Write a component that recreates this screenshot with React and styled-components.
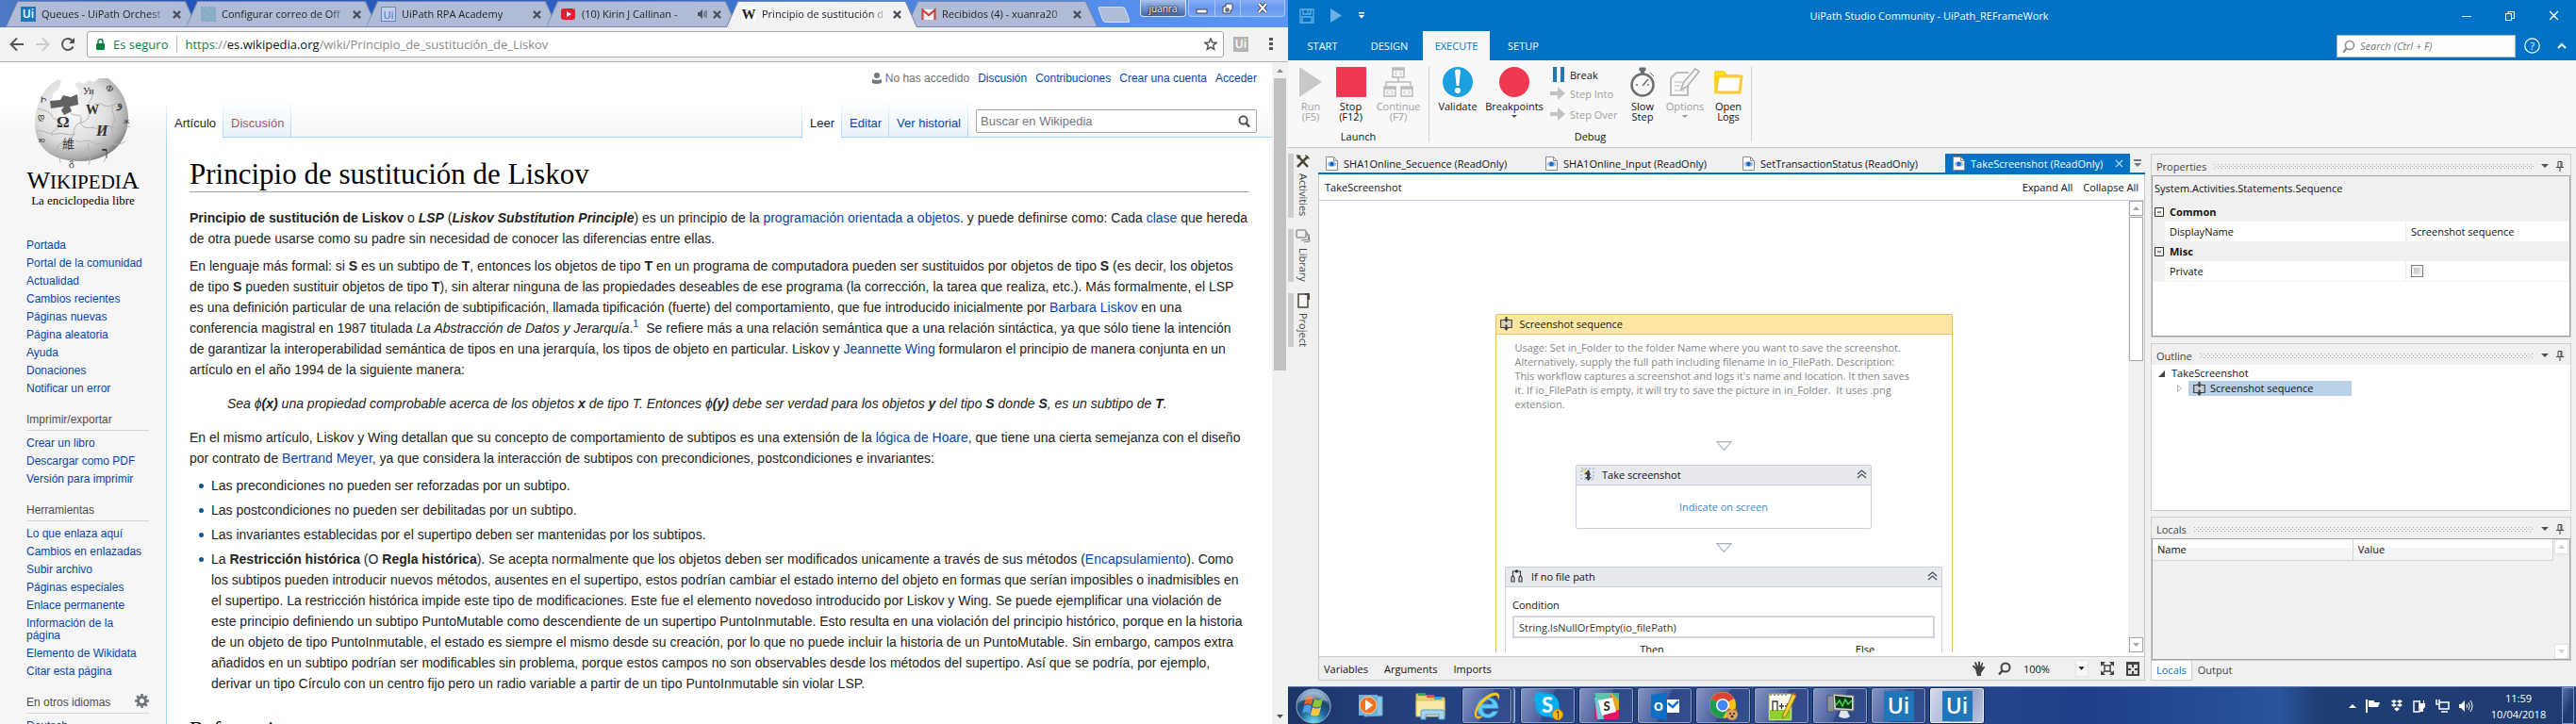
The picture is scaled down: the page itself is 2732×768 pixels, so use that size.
import React from "react";
import styled, { createGlobalStyle, css } from "styled-components";

const UI = '"Open Sans", "Noto Sans", sans-serif';
const SANS = '"Liberation Sans", Arial, sans-serif';
const SERIF = '"Liberation Serif", Georgia, serif';

const Global = createGlobalStyle`
  * { box-sizing: border-box; }
  body { margin: 0; overflow: hidden; font-family: ${SANS}; }
  button, input, select { font: inherit; color: inherit; margin: 0; padding: 0; border: 0; background: none; border-radius: 0; }
  button { text-align: inherit; }
  a { color: #0645ad; text-decoration: none; }
  svg { display: block; flex: none; }
  ul { list-style: none; margin: 0; padding: 0; }
`;

const Desktop = styled.div`
  display: flex;
  height: 100vh;
`;

/* ---------- Browser ---------- */
const Browser = styled.section`
  flex: 1 1 0;
  min-width: 0;
  display: flex;
  flex-direction: column;
  background: #fff;
`;
const TabStrip = styled.div`
  display: flex;
  align-items: flex-end;
  height: 29px;
  padding-left: 6px;
  flex: none;
  background: linear-gradient(90deg, #4e7ac6 0, #2355ba 14%, #2c60c4 45%, #4a83e0 68%, #5d96f2 100%);
`;
const BrowserTab = styled.div`
  position: relative;
  width: 203px;
  height: 28px;
  margin-right: -12px;
  padding: 0 17px 0 16px;
  display: flex;
  align-items: center;
  gap: 6px;
  font: 11px/16px ${UI};
  color: #222;
  isolation: isolate;
  z-index: ${(p) => (p.$active ? 2 : 0)};
  &::before, &::after {
    content: "";
    position: absolute;
    inset: 0;
    z-index: -2;
    background: #7486ad;
    clip-path: polygon(0 100%, 12px 0, calc(100% - 12px) 0, 100% 100%);
  }
  &::after {
    inset: ${(p) => (p.$active ? "1px 1px 0" : "1px")};
    z-index: -1;
    background: ${(p) => (p.$active ? "#f2f2f2" : "#b0bcd6")};
  }
`;
const TabName = styled.span`
  flex: 1;
  min-width: 0;
  overflow: hidden;
  white-space: nowrap;
  mask-image: linear-gradient(90deg, #000 calc(100% - 18px), transparent);
`;
const IconButton = styled.button`
  display: flex;
  align-items: center;
  justify-content: center;
`;
const NewTab = styled.button`
  width: 29px;
  height: 17px;
  margin: 0 0 5px 15px;
  border: 1px solid #d3def2;
  background: #b0bcd6;
  transform: skewX(20deg);
  border-radius: 3px;
`;
const UserBadge = styled.button`
  align-self: flex-start;
  width: 49px;
  height: 18px;
  margin-left: auto;
  border: 1px solid #d5e2f8;
  border-top: 0;
  border-radius: 0 0 4px 4px;
  text-align: center;
  background: linear-gradient(#a9c3ea, #6d92cc 50%, #45639d);
  color: #fff;
  font: 10px/16px ${UI};
  text-shadow: 0 0 2px #000, 0 0 2px #000;
`;
const Caption = styled.div`
  align-self: flex-start;
  display: grid;
  grid-template-columns: 27px 27px 47px;
  height: 18px;
  margin: 0 3px 0 2px;
  border: 1px solid #a9c6f8;
  border-top: 0;
  border-radius: 0 0 4px 4px;
  background: linear-gradient(#86aef3, #6899f0 50%, #77a5f5);
  button + button { border-left: 1px solid #a9c6f8; }
`;
const Toolbar = styled.div`
  display: flex;
  align-items: center;
  flex: none;
  height: 37px;
  padding: 0 10px;
  background: #f2f2f2;
  border-bottom: 1px solid #b5b5b5;
`;
const NavButtons = styled.div`
  display: flex;
  gap: 11px;
  width: 82px;
`;
const AddressBar = styled.div`
  flex: 1;
  display: flex;
  align-items: center;
  height: 28px;
  padding: 0 6px 0 9px;
  border: 1px solid #a9a9a9;
  border-radius: 3px;
  background: #fff;
  font: 13px/18px ${UI};
  color: #8a8a8a;
`;
const Secure = styled.span`
  color: #0b8043;
  padding: 0 9px;
  margin-right: 8px;
  border-right: 1px solid #bbb;
`;
const Url = styled.span`
  flex: 1;
  white-space: nowrap;
  b { font-weight: 400; color: #111; }
  i { font-style: normal; color: #0b8043; }
`;
const ToolbarEnd = styled.div`
  display: flex;
  align-items: center;
  gap: 22px;
  margin-left: 10px;
  padding-right: 6px;
`;
const UiTile = styled.span`
  display: inline-flex;
  align-items: center;
  justify-content: center;
  flex: none;
  width: ${(p) => p.$size}px;
  height: ${(p) => p.$size}px;
  background: ${(p) => p.$bg};
  color: ${(p) => p.$fg || "#fff"};
  border: ${(p) => (p.$outline ? "1px solid " + p.$fg : "0")};
  font: 600 ${(p) => p.$font}px/1 ${UI};
`;

/* ---------- Wikipedia page ---------- */
const Wiki = styled.div`
  flex: 1;
  min-height: 0;
  overflow: hidden;
  display: grid;
  grid-template-columns: 176px minmax(0, 1fr) 17px;
  background: linear-gradient(#fff 50%, #f6f6f6 100%) 0 0 / 100% 80px no-repeat #f6f6f6;
`;
const Sidebar = styled.aside`
  padding: 17px 18px 0 28px;
  font: 12px/13px ${SANS};
  li { padding: 3px 0; }
  overflow: hidden;
`;
const Logo = styled.a`
  display: flex;
  flex-direction: column;
  align-items: center;
  margin: 0 -10px 31px -28px;
  padding-left: 8px;
  color: #000;
`;
const Wordmark = styled.span`
  font: 26px/26px ${SERIF};
  small { font-size: 21px; }
`;
const Tagline = styled.span`
  font: 13px/14px ${SERIF};
`;
const NavTitle = styled.h3`
  display: flex;
  justify-content: space-between;
  margin: 14px 0 4px;
  padding-bottom: 1px;
  border-bottom: 1px solid #d4d4d4;
  font: 12px/19px ${SANS};
  color: #4d4d4d;
`;
const WikiMain = styled.div`
  display: flex;
  flex-direction: column;
  min-width: 0;
  min-height: 0;
`;
const Personal = styled.nav`
  display: flex;
  justify-content: flex-end;
  align-items: center;
  gap: 9px;
  height: 40px;
  padding: 0 16px 6px 0;
  font: 12px/14px ${SANS};
`;
const Anon = styled.span`
  display: flex;
  align-items: center;
  gap: 4px;
  color: #707070;
`;
const fadeLine = "linear-gradient(#fff0, #a7d7f9)";
const WikiTabs = styled.nav`
  display: flex;
  height: 40px;
  font: 13px/16px ${SANS};
  background: ${fadeLine} 0 0 / 1px 100% no-repeat;
  padding-left: 1px;
`;
const WikiTab = styled.a`
  padding: 17px 8px 0;
  color: ${(p) => p.$color || "#0645ad"};
  border-bottom: ${(p) => (p.$on ? "0" : "1px solid #a7d7f9")};
  background: ${fadeLine} 100% 0 / 1px 100% no-repeat,
    ${(p) => (p.$on ? "linear-gradient(#fff, #fff)" : "linear-gradient(#fff, #e8f2f8)")};
`;
const TabSpace = styled.div`
  flex: 1;
  border-bottom: 1px solid #a7d7f9;
  background: ${fadeLine} 100% 0 / 1px 100% no-repeat;
`;
const SearchCell = styled.div`
  border-bottom: 1px solid #a7d7f9;
  padding: 10px 16px 0 8px;
`;
const SearchBox = styled.form`
  display: flex;
  align-items: center;
  width: 298px;
  height: 25px;
  padding: 0 6px 0 4px;
  border: 1px solid #a2a9b1;
  border-radius: 2px;
  background: #fff;
  input { flex: 1; min-width: 0; outline: 0; }
  input::placeholder { color: #72777d; opacity: 1; }
`;
const Article = styled.article`
  flex: 1;
  min-height: 0;
  overflow: hidden;
  padding: 20px 24px 0;
  border-left: 1px solid #a7d7f9;
  background: #fff;
  color: #222;
  font: 14px/22px ${SANS};
  p { margin: 0 0 7px; }
  sup { font-size: 11px; line-height: 0; }
  blockquote { margin: 14px 40px; }
  li { position: relative; margin-bottom: 4px; }
  li::before {
    content: "";
    position: absolute;
    left: -13px;
    top: 9px;
    width: 5px;
    height: 5px;
    border-radius: 50%;
    background: #0a5793;
  }
  ul { padding-left: 23px; }
`;
const Title = styled.h1`
  margin: 0 0 16px;
  border-bottom: 1px solid #a2a9b1;
  color: #000;
  font: 31px/37px ${SERIF};
`;
const Subtitle = styled.h2`
  margin: 24px 0 0;
  color: #000;
  border-bottom: 1px solid #a2a9b1;
  font: 23px/28px ${SERIF};
`;
const PageScroll = styled.div`
  display: flex;
  flex-direction: column;
  align-items: center;
  justify-content: space-between;
  padding: 7px 0 6px;
  background: #f1f1f1;
`;
const PageThumb = styled.div`
  width: 13px;
  flex: 0 0 45%;
  background: #c1c1c1;
  margin: 6px 0 auto;
`;

/* ---------- Studio ---------- */
const Studio = styled.section`
  flex: 1 1 0;
  min-width: 0;
  display: flex;
  flex-direction: column;
  background: #f0f0f0;
  font: 11px/15px ${UI};
  color: #111;
`;
const TitleBar = styled.header`
  display: grid;
  grid-template-columns: 1fr auto 1fr;
  align-items: center;
  flex: none;
  height: 33px;
  padding: 0 18px 0 12px;
  background: #0072c6;
  color: #fff;
`;
const QuickBar = styled.div`
  display: flex;
  align-items: center;
  gap: ${(p) => p.$gap}px;
  justify-content: ${(p) => p.$end && "flex-end"};
`;
const MenuBar = styled.div`
  display: flex;
  align-items: center;
  flex: none;
  height: 31px;
  padding: 0 10px 0 1px;
  background: #0072c6;
  color: #fff;
`;
const MenuTab = styled.button`
  width: 71px;
  height: 31px;
  text-align: center;
  background: ${(p) => (p.$on ? "#f8f8f8" : "none")};
  color: ${(p) => (p.$on ? "#0072c6" : "#fff")};
`;
const StudioSearch = styled.label`
  display: flex;
  align-items: center;
  gap: 5px;
  width: 190px;
  height: 24px;
  margin-left: auto;
  padding: 0 5px;
  border: 1px solid #b9b9b9;
  background: #fff;
  color: #777;
  font-style: italic;
  input { width: 100%; font-style: italic; outline: 0; }
  input::placeholder { color: #777; opacity: 1; }
`;
const HelpTools = styled.div`
  display: flex;
  align-items: center;
  gap: 18px;
  margin-left: 9px;
`;
const Ribbon = styled.div`
  display: flex;
  flex: none;
  height: 93px;
  padding: 6px 0;
  background: #f8f8f8;
  border-bottom: 1px solid #c3c3c3;
`;
const Group = styled.div`
  display: flex;
  flex-direction: column;
  justify-content: space-between;
  padding: 0 3px;
  border-right: 1px solid #d2d2d2;
  text-align: center;
  line-height: 11px;
`;
const GroupRow = styled.div`
  display: flex;
`;
const RibbonButton = styled.button`
  display: flex;
  flex-direction: column;
  align-items: center;
  gap: 4px;
  width: ${(p) => p.$w}px;
  padding-top: 1px;
  text-align: center;
  line-height: 11px;
  color: ${(p) => (p.$off ? "#a0a0a0" : "#111")};
  white-space: pre-line;
`;
const SmallStack = styled.div`
  display: flex;
  flex-direction: column;
  width: 83px;
  padding-left: 5px;
`;
const SmallButton = styled.button`
  display: flex;
  align-items: center;
  gap: 4px;
  height: 22px;
  white-space: nowrap;
  color: ${(p) => (p.$off ? "#a0a0a0" : "#111")};
  &:first-child { height: 18px; }
`;
const Workspace = styled.div`
  flex: 1;
  min-height: 0;
  display: grid;
  grid-template-columns: 32px minmax(0, 1fr) 446px;
  padding: 6px 5px 6px 0;
`;
const Rail = styled.nav`
  display: flex;
  flex-direction: column;
  gap: 12px;
`;
const RailButton = styled.button`
  display: flex;
  align-items: center;
  gap: 5px;
  width: 26px;
  height: ${(p) => p.$h}px;
  border-left: 6px solid #cdcdcd;
  writing-mode: vertical-rl;
  font: 11px/16px ${UI};
  color: #444;
`;
const Editor = styled.main`
  display: flex;
  flex-direction: column;
  min-width: 0;
  min-height: 0;
  margin-right: 6px;
`;
const DocTabs = styled.div`
  display: flex;
  align-items: center;
  flex: none;
  height: 22px;
  border-bottom: 2px solid #0072c6;
`;
const DocTab = styled.button`
  display: flex;
  align-items: center;
  flex: none;
  gap: 6px;
  width: ${(p) => p.$w}px;
  height: 20px;
  padding: 0 7px 0 8px;
  white-space: nowrap;
  ${(p) => p.$on && css`background: #0072c6; color: #fff;`}
  svg:last-child:not(:first-child) { margin-left: auto; }
`;
const EditorFrame = styled.div`
  flex: 1;
  min-height: 0;
  display: flex;
  flex-direction: column;
  border: 1px solid #c8c8c8;
  border-top: 0;
  background: #fff;
`;
const Crumbs = styled.div`
  display: flex;
  align-items: center;
  flex: none;
  gap: 11px;
  height: 28px;
  padding: 0 6px;
  border-bottom: 1px solid #c9cde3;
  span { flex: 1; }
`;
const CanvasRow = styled.div`
  flex: 1;
  min-height: 0;
  display: flex;
  margin-bottom: 4px;
`;
const Canvas = styled.div`
  flex: 1;
  min-width: 0;
  overflow: hidden;
  padding-top: 120px;
`;
const ScrollTrack = styled.div`
  display: flex;
  flex-direction: column;
  width: 17px;
  flex: none;
  padding: 0 1px;
  background: #f0f0f0;
`;
const ScrollButton = styled.button`
  display: flex;
  align-items: center;
  justify-content: center;
  height: 16px;
  flex: none;
  border: 1px solid ${(p) => p.$c || "#a6a6a6"};
  background: #fff;
`;
const ScrollThumb = styled.div`
  flex: 0 0 32%;
  margin: 1px 0 auto;
  border: 1px solid #a6a6a6;
  background: #fff;
`;
const Spacer = styled.div`
  flex: 1;
`;
const Card = styled.div`
  width: ${(p) => p.$w}px;
  height: ${(p) => p.$h && p.$h + "px"};
  margin: 0 auto;
  border: 1px solid ${(p) => (p.$gold ? "#e5c365" : "#c9cfdd")};
  border-radius: 2px;
  background: #fff;
`;
const CardHead = styled.div`
  display: flex;
  align-items: center;
  gap: 8px;
  height: 21px;
  padding: 0 4px 2px;
  background: ${(p) => (p.$gold ? "#ffe7a2" : "#e7e9ed")};
  border-bottom: 1px solid ${(p) => (p.$gold ? "#e5c365" : "#c9cfdd")};
  span { flex: 1; }
`;
const Annotation = styled.p`
  margin: 6px 43px 32px 20px;
  color: #868686;
`;
const Connector = styled.div`
  display: flex;
  justify-content: center;
  margin: ${(p) => (p.$first ? "0" : "15px")} 0 15px;
`;
const Indicate = styled.a`
  display: block;
  padding-top: 15px;
  text-align: center;
  color: #3a87cc;
`;
const Condition = styled.label`
  display: block;
  padding: 11px 7px 0;
  input {
    display: block;
    width: 100%;
    height: 24px;
    margin-top: 4px;
    padding: 0 5px;
    border: 2px solid #cfd4e2;
    color: #333;
  }
`;
const Branches = styled.div`
  display: grid;
  grid-template-columns: 226px 1fr;
  padding: 4px 0 20px 42px;
  text-align: center;
  span + span { padding-left: 32px; }
`;
const StatusBar = styled.div`
  display: flex;
  align-items: center;
  flex: none;
  height: 25px;
  padding: 0 5px;
  gap: 17px;
  background: #f0f0f0;
  border-top: 1px solid #c8c8c8;
`;
const ZoomTools = styled.div`
  display: flex;
  align-items: center;
  gap: 13px;
  margin-left: auto;
`;
const ZoomSelect = styled.span`
  display: flex;
  align-items: center;
  select { appearance: none; width: 55px; outline: 0; }
  svg { width: 14px; height: 18px; background: #f8f8f8; border: 1px solid #e4e4e4; }
`;
const Panels = styled.aside`
  display: grid;
  grid-template-rows: 195fr 178fr 174fr;
  gap: 6px;
  min-height: 0;
`;
const Panel = styled.section`
  display: flex;
  flex-direction: column;
  min-height: 0;
  flex: 1;
  border: 1px solid #cdcdcd;
`;
const PanelHead = styled.header`
  display: flex;
  align-items: center;
  gap: 8px;
  flex: none;
  height: 22px;
  padding: 2px 7px 0 5px;
  color: #444;
`;
const Grip = styled.span`
  flex: 1;
  height: 5px;
  background:
    conic-gradient(from 270deg at 1px 1px, #a5a5a5 90deg, #0000 0) 0 0 / 4px 4px,
    conic-gradient(from 270deg at 1px 1px, #a5a5a5 90deg, #0000 0) 2px 2px / 4px 4px;
`;
const Inset = styled.div`
  flex: 1;
  min-height: 0;
  display: flex;
  flex-direction: column;
  border: ${(p) => (p.$plain ? "0" : "1px solid #a0a0a0")};
  background: ${(p) => (p.$gray ? "#f0f0f0" : "#fff")};
`;
const ClassName = styled.div`
  padding: 5px 2px 7px;
  background: #f0f0f0;
`;
const PropTable = styled.table`
  width: 100%;
  border-collapse: collapse;
  table-layout: fixed;
  background: #f0f0f0;
  td, th { height: 21px; padding: 0 5px; text-align: left; font-weight: 400; }
  td { background: #fff; border: solid #f0f0f0; border-width: 0 1px 1px 0; }
  .gutter { background: #f0f0f0; }
  input[type="checkbox"] { display: block; }
`;
const Category = styled.div`
  display: flex;
  align-items: center;
  gap: 6px;
  margin-left: -3px;
  font-weight: 700;
`;
const Tick = styled.input`
  appearance: none;
  width: 13px;
  height: 13px;
  border: 1px solid #7f8080;
  background: linear-gradient(135deg, #b3b9c1, #f4f4f4);
  box-shadow: inset 0 0 0 2px #f4f4f4;
`;
const Tree = styled.ul`
  padding: 1px 5px;
  li { line-height: 16px; }
`;
const TreeRow = styled.div`
  display: flex;
  align-items: center;
  gap: 7px;
  height: 16px;
  padding-left: ${(p) => (p.$child ? 22 : 2)}px;
`;
const Selected = styled.span`
  display: flex;
  align-items: center;
  gap: 5px;
  width: 173px;
  height: 16px;
  padding-left: 5px;
  background: #b9d1e8;
`;
const LocalsTable = styled.table`
  align-self: flex-start;
  width: 100%;
  border-collapse: collapse;
  table-layout: fixed;
  th {
    height: 22px;
    padding: 0 5px;
    text-align: left;
    font-weight: 400;
    border: solid #d5d5d5;
    border-width: 0 1px 1px 0;
    background: linear-gradient(#fff 40%, #f3f4f6 42%);
  }
`;
const LocalsBody = styled.div`
  display: flex;
  flex: 1;
  min-height: 0;
`;
const FootTabs = styled.div`
  display: flex;
  flex: none;
  height: 21px;
`;
const FootTab = styled.button`
  padding: 0 5px 1px;
  color: ${(p) => (p.$on ? "#0072c6" : "#444")};
  border: solid ${(p) => (p.$on ? "#cdcdcd" : "transparent")};
  border-width: 0 1px 1px;
  background: ${(p) => (p.$on ? "#fff" : "none")};
`;
const Bottom = styled.div`
  display: flex;
  flex-direction: column;
  min-height: 0;
`;

/* ---------- Task bar ---------- */
const TaskBar = styled.footer`
  display: flex;
  align-items: center;
  flex: none;
  height: 40px;
  padding: 0 2px 0 9px;
  border-top: 1px solid #5b78ab;
  background: linear-gradient(90deg, #1c3467 0, #25427f 10%, #28478c 50%, #1e4088 62%, #2a549b 77%, #1f3e74 80%, #1f3c70 100%);
  color: #fff;
`;
const Pinned = styled.button`
  display: flex;
  align-items: center;
  justify-content: center;
  width: ${(p) => p.$w}px;
  margin-right: ${(p) => p.$after || 0}px;
`;
const TaskButton = styled.button`
  display: flex;
  align-items: center;
  justify-content: center;
  width: ${(p) => (p.$stack ? 54 : 59)}px;
  height: 39px;
  margin-right: ${(p) => (p.$stack ? 8 : 3)}px;
  border: 1px solid #16264d;
  border-radius: 3px;
  box-shadow: inset 0 0 0 1px ${(p) => (p.$on ? "#e6ecf8" : "#8fa3cd")}${(p) => (p.$stack ? ", 3px 0 0 -1px #5671ab, 4px 0 0 -1px #a7b6d8" : "")};
  background: ${(p) => (p.$on ? "linear-gradient(115deg, #d5dbec, #a9b4d4 50%, #8895c0 52%, #c2cbe2)" : "linear-gradient(115deg, #8796c4, #4a609f 48%, #2f4888 52%, #36508f)")};
`;
const Tray = styled.div`
  display: flex;
  align-items: center;
  gap: 10px;
  margin-left: auto;
`;
const Clock = styled.time`
  width: 72px;
  margin-left: 2px;
  text-align: center;
  line-height: 17px;
`;
const ShowDesktop = styled.button`
  width: 13px;
  height: 39px;
  border: 1px solid #7f97c4;
  background: linear-gradient(115deg, #5470a8, #1e3a70 60%);
`;

/* ---------- Icons ---------- */
const Svg = ({ w, h, vb, children, ...r }) => (
  <svg width={w} height={h} viewBox={vb || `0 0 ${w} ${h}`} fill="none" aria-hidden="true" {...r}>{children}</svg>
);
const Cross = ({ s = 8, c = "#4a4f5c", w = 2 }) => (
  <Svg w={s} h={s} vb="0 0 8 8"><path d="M.8 .8l6.400 6.400M7.200 .8L.8 7.200" stroke={c} strokeWidth={w} /></Svg>
);
const Tri = ({ up, c = "#505050", w = 7, h = 4 }) => (
  <Svg w={w} h={h} vb="0 0 8 4" preserveAspectRatio="none"><path d={up ? "M0 4L4 0l4 4z" : "M0 0l4 4 4-4z"} fill={c} /></Svg>
);
const CaretBox = () => <Svg w={14} h={18}><path d="M3 7h7l-3.500 4z" fill="#111" /></Svg>;
const Globe = () => (
  <Svg w={104} h={96}>
    <defs>
      <radialGradient id="ball" cx=".4" cy=".38" r=".66">
        <stop offset="0" stopColor="#fbfbfb" /><stop offset=".6" stopColor="#dedede" /><stop offset=".88" stopColor="#adadad" /><stop offset="1" stopColor="#7a7a7a" />
      </radialGradient>
    </defs>
    <path d="M18 6l8-5 3 3-3 8-5 3-3 10 4 3 9-2 4-4 6 1 8-3-2-8 -4-6 6-2 4 2 5-4 6 2 5-4 10 0 6 6c9 8 15 22 15 36 0 27-21 46-51 46S1 74 1 48C1 34 6 17 18 6z" fill="url(#ball)" />
    <path d="M17 24l11-1 3-5 8 2 7-3 1 11-9 2 2 5-8 4-3-5 3-4-14 2z" fill="#616161" />
    <g stroke="#b2b2b2" strokeWidth="1">
      <path d="M4 32c8 3 12 2 15 8s9 2 8 9-9 5-8 12M38 36c4 6 14 0 12 8s6 10 14 8M2 56c9-2 14 5 22 3s13 3 20 0M28 90c0-8-6-10-3-17s12-3 15-9 2-12 6-15 10-2 12-8-3-12 2-18-2-12-2-14" />
      <path d="M64 28c8-4 10 4 18 1s10-4 15-2M61 52c10 4 14-4 22 0s11 2 19-1M84 28c-4 8 5 12 0 20s4 14-2 21-3 12-8 20M44 66c8 4 12-3 18 2s12-2 20 1 10 0 15-2M58 68c-3 8 5 12 0 24" />
    </g>
    <g fill="#333" fontFamily="Liberation Serif, serif">
      <text x="24" y="52" fontSize="17" fontWeight="700">Ω</text>
      <text x="55" y="38" fontSize="14" fontWeight="700">W</text>
      <text x="66" y="61" fontSize="16" fontWeight="700" fontStyle="italic">И</text>
      <text x="72" y="82" fontSize="13" fontWeight="700">ך</text>
      <text x="52" y="17" fontSize="10">Уи</text>
      <text x="76" y="14" fontSize="10" transform="rotate(20 80 12)">Ф</text>
      <text x="88" y="31" fontSize="13">و</text>
      <text x="7" y="26" fontSize="9">Ի</text>
      <text x="4" y="44" fontSize="9">დ</text>
      <text x="5" y="68" fontSize="9">ю</text>
      <text x="37" y="93" fontSize="10">გ</text>
      <text x="95" y="48" fontSize="9">ж</text>
      <text x="30" y="74" fontSize="13" fontFamily="Noto Sans CJK TC, sans-serif">維</text>
    </g>
  </Svg>
);
const MailIcon = () => (
  <Svg w={16} h={16}><path d="M1 3h14v11H1z" fill="#f4f4f4" /><path d="M1.500 14V3.500L8 9l6.500-5.500V14" stroke="#c9423c" strokeWidth="2.200" /></Svg>
);
const Knit = () => (
  <Svg w={16} h={16}>{[0, 4, 8, 12].map((x) => [0, 4, 8, 12].map((y) => (
    <path key={x + "-" + y} d={`M${x} ${y}l4 2M${x} ${y + 2}l4 2`} stroke={(x + y) % 8 ? "#8e9ad0" : "#5bb0aa"} strokeWidth="1.200" />
  )))}</Svg>
);
const Play = ({ w, h, c }) => <Svg w={w} h={h} vb="0 0 12 16" preserveAspectRatio="none"><path d="M0 0l12 8-12 8z" fill={c} /></Svg>;
const Flow = () => (
  <Svg w={32} h={32}><g stroke="#b9b9b9" strokeWidth="1.500">
    <path d="M10 1h12v10H10zM1 21h12v10H1zM19 21h12v10H19zM16 11v5M3 20v-4h26v4" />
    <path d="M10 2.500h12M1 22.500h12M19 22.500h12" strokeWidth="2.500" />
    <path d="M14.500 5l-2 2 2 2M17.500 5l2 2-2 2M5.500 25l-2 2 2 2M8.500 25l2 2-2 2M23.500 25l-2 2 2 2M26.500 25l2 2-2 2" strokeWidth="1" />
  </g></Svg>
);
const Warn = () => (
  <Svg w={32} h={32}><circle cx="16" cy="16" r="16" fill="#1ba1e2" /><path d="M13 4.500a3 2 0 016 0L17.300 20h-2.600z" fill="#fff" /><circle cx="16" cy="25" r="3" fill="#fff" /></Svg>
);
const Watch = () => (
  <Svg w={32} h={32}><circle cx="16" cy="19" r="11.500" stroke="#6b6f73" strokeWidth="2.500" /><path d="M13 1h6v3h-1.500v4h-3V4H13zM24 6l4 4" fill="#6b6f73" stroke="#6b6f73" /><path d="M16 20l6-7M9 19h2M21 19h2" stroke="#6b6f73" strokeWidth="1.500" /></Svg>
);
const Notes = () => (
  <Svg w={32} h={32}><path d="M20 6H7L1 12v18h18V19" stroke="#bdbdbd" strokeWidth="2" /><path d="M5 16h8M5 20h6M5 25h10" stroke="#bdbdbd" /><path d="M12 24l2-7L27 2l4 3-13 16z" fill="#f8f8f8" stroke="#adadad" strokeWidth="1.500" /></Svg>
);
const Folder = () => (
  <Svg w={32} h={32}><path d="M2 27V5h9l3 4h13v3" fill="#ffee00" stroke="#ffd21c" strokeWidth="2" /><path d="M5 10h25l-2 17H3z" fill="#fff" stroke="#ffc937" strokeWidth="3" /></Svg>
);
const ArrowR = () => <Svg w={17} h={14}><path d="M0 5h8V0l8 7-8 7V9H0z" fill="#c2c2c2" /></Svg>;
const Pause = () => <Svg w={17} h={16}><path d="M3 0h4v16H3zM11 0h4v16h-4z" fill="#1f76b9" /></Svg>;
const Doc = () => (
  <Svg w={13} h={15}><path d="M.500 .500h8l4 4v10H.500z" fill="#fff" stroke="#8c8c8c" /><path d="M8.500 .500v4h4" stroke="#8c8c8c" /><ellipse cx="6.500" cy="8" rx="5" ry="3" fill="#a8c4e8" /><circle cx="6.500" cy="8" r="2.300" fill="#1767c4" /></Svg>
);
const SeqIcon = () => (
  <Svg w={13} h={15}><path d="M2 3h9v9H2z" fill="#ccc" opacity=".7" /><path d="M4 3.500H.700v8H4M9 3.500h3.300v8H9" stroke="#444" strokeWidth="1.200" /><path d="M3.500 2.500h6L6.500 6zM3.500 11h6l-3 4zM5.500 0h2v3h-2zM5.500 8.500h2V12h-2z" fill="#3d3d3d" /></Svg>
);
const ShotIcon = () => (
  <Svg w={15} h={14}><rect x="1" y="1" width="13" height="11" stroke="#6aa8d8" strokeDasharray="2 2" /><path d="M4 7l5-5 2 6zM7 6h3v4h2l-3.500 4L5 10h2z" fill="#44484d" /><circle cx="4" cy="3" r="2" fill="#f4d56a" /></Svg>
);
const IfIcon = () => (
  <Svg w={15} h={15}><path d="M3.500 5V2h8v3M2 9l1.500-3L5 9v4H2zM10 9l1.500-3L13 9v4h-3z" stroke="#3d3d3d" strokeWidth="1.200" /><circle cx="7.500" cy="2" r="1.700" fill="#333" /></Svg>
);
const Collapse = () => <Svg w={11} h={10}><path d="M1 5l4.500-4L10 5M1 9l4.500-4L10 9" stroke="#444b5a" strokeWidth="1.200" /></Svg>;
const DownTri = () => <Svg w={17} h={10}><path d="M.800 .600h15.400L8.500 9.300z" fill="#fff" stroke="#a8b2c2" strokeWidth="1.200" /></Svg>;
const Pin = () => <Svg w={8} h={11}><path d="M2 .500h4v6H2zM5 .500v6M0 6.500h8M4 7v4" stroke="#444" /></Svg>;
const Lens = ({ s = 13, c = "#4a4f54", flip, w = 2 }) => (
  <Svg w={s} h={s} vb="0 0 14 14"><g transform={flip ? "translate(14 0) scale(-1 1)" : undefined}><circle cx="6" cy="6" r="4.500" stroke={c} strokeWidth={w} /><path d="M9 9l4 4.500" stroke={c} strokeWidth={w + 0.5} /></g></Svg>
);
const Minus = () => <Svg w={10} h={10}><path d="M.500 .500h9v9h-9zM3 5h4" stroke="#333" /></Svg>;
const Orb = () => (
  <Svg w={38} h={38}>
    <defs><radialGradient id="orb" cx=".5" cy="1" r=".95"><stop offset="0" stopColor="#6fe6f5" /><stop offset=".45" stopColor="#1b5f94" /><stop offset=".7" stopColor="#1e4570" /><stop offset="1" stopColor="#8fb2d2" /></radialGradient></defs>
    <circle cx="19" cy="19" r="18" fill="url(#orb)" stroke="#9bb8d8" />
    <path d="M11 10c3-2 5-2 8 0l-2 8c-3-2-5-2-8 0z" fill="#e8602c" /><path d="M20 11c3 2 6 2 9 0l-2 8c-3 2-6 2-9 0z" fill="#8cc63f" />
    <path d="M9 19c3-2 5-2 8 0l-2 8c-3-2-5-2-8 0z" fill="#4a9fe0" /><path d="M18 20c3 2 6 2 9 0l-2 8c-3 2-6 2-9 0z" fill="#fdc83e" />
    <path d="M3 15a17 17 0 0132 0c-9-5-22-5-32 0z" fill="#fff" opacity=".3" />
  </Svg>
);
const MediaIcon = () => (
  <Svg w={26} h={25}><path d="M6 2l19 1v20L6 24z" fill="#8fc4e6" stroke="#5f9fcb" /><path d="M0 1h20v22H0z" fill="#6fb0d8" /><circle cx="10" cy="12" r="9" fill="#ee7420" stroke="#fbd0a2" /><path d="M7 6l8 6-8 6z" fill="#fff" /></Svg>
);
const FilesIcon = () => (
  <Svg w={32} h={30}><path d="M1 2h9l3 4h18v18H1z" fill="#e9cf72" stroke="#c6a644" /><path d="M3 1h8v3H3z" fill="#3f9e46" /><path d="M12 3h8v3h-8z" fill="#d9534f" /><path d="M20 5h8v3h-8z" fill="#3aa5dc" /><path d="M1 9h30v17H1z" fill="#f8e9a6" stroke="#d6bb60" /><path d="M6 29v-8q0-2 2-2h20q3 0 3 2v8h-6v-5H11v5z" fill="#a5d3ee" stroke="#5d9cc9" /></Svg>
);
const IeIcon = () => (
  <Svg w={32} h={32}><path d="M28 18.500H11.500c0 7 8 8 10.500 3h5.500c-4 11-22 9-22-4.500S28 3 28 18.500zM11.500 14h10.500c-1-6-9.500-6-10.500 0z" fill="#5fc8f5" stroke="#2a8fd0" fillRule="evenodd" /><path d="M5 29C-2 24 9 6 22 2c6-2 9 2 6 8 0-5-2-6-6-4.500C13 9 5 19 5 25c0 3 4 2.500 7 1-3 3-5 4-7 3z" fill="#f9c51d" /></Svg>
);
const SkypeIcon = () => (
  <Svg w={32} h={32}><circle cx="15" cy="15" r="12.500" fill="#00aff0" /><circle cx="8" cy="8" r="7" fill="#00aff0" /><circle cx="22" cy="22" r="7" fill="#00aff0" />
    <text x="15" y="23" textAnchor="middle" fontFamily="Lato, sans-serif" fontWeight="900" fontSize="22" fill="#fff">S</text>
    <circle cx="26" cy="25" r="5.500" fill="#ffb900" stroke="#c88a00" /><text x="26" y="29" textAnchor="middle" fontSize="10" fill="#222">1</text></Svg>
);
const SlackIcon = () => (
  <Svg w={26} h={28}><rect width="26" height="28" rx="2" fill="#e01765" /><path d="M0 0h18l-2 8L2 10z" fill="#5dc3a9" /><path d="M0 5l6 1 4 22H3z" fill="#6ecadc" /><path d="M17 0h9v18l-6 1z" fill="#e9a820" /><path d="M18 0l8 0v8z" fill="#3eb991" /><path d="M4 8l15-3 4 15-15 4z" fill="#fff" />
    <text x="13" y="19" textAnchor="middle" fontFamily="Lato, sans-serif" fontWeight="900" fontSize="13" fill="#333">S</text></Svg>
);
const MailAppIcon = () => (
  <Svg w={32} h={32}><path d="M17 9h14v14H17z" fill="#fff" /><path d="M19 13l5 4 6-6" stroke="#1173c7" strokeWidth="2.500" /><path d="M1 4l17-3v30L1 28z" fill="#0f6ec2" />
    <text x="9" y="21" textAnchor="middle" fontFamily="Open Sans, sans-serif" fontWeight="700" fontSize="13" fill="#fff">O</text></Svg>
);
const ChromeIcon = () => (
  <Svg w={32} h={32}><circle cx="15" cy="15" r="14" fill="#fbc116" /><path d="M15 15L3 8a14 14 0 0124 0z" fill="#db4437" /><path d="M15 15L3 8a14 14 0 0012 21l5-9z" fill="#1a9c55" /><circle cx="15" cy="15" r="7" fill="#fff" /><circle cx="15" cy="15" r="5.500" fill="#4285f4" /><circle cx="25" cy="25" r="6" fill="#d9a25f" /><path d="M19 22l2-4 3 2M31 22l-2-4-3 2" fill="#a86a2a" /><circle cx="23" cy="24" r="1" fill="#222" /><circle cx="27" cy="24" r="1" fill="#222" /><circle cx="25" cy="27" r="1.300" fill="#222" /></Svg>
);
const NppIcon = () => (
  <Svg w={32} h={32}><path d="M2 3h24v28H2z" fill="#fdfdf2" stroke="#8db04a" /><path d="M3 20h22v10H3z" fill="#8ed02c" /><path d="M3 2h2v3H3zM7 2h2v3H7zM11 2h2v3h-2zM15 2h2v3h-2zM19 2h2v3h-2z" fill="#999" /><path d="M6 21V11h5v10M13 16h5M15.500 13v6M19 16h5M21.500 13v6" stroke="#333" strokeWidth="1.300" /><path d="M27 3l4 2-11 22-4 2 1-4z" fill="#f6cf3c" stroke="#9b7a12" /><path d="M28 1l3 2-1 2-3-2z" fill="#d94a3a" /></Svg>
);
const MonIcon = () => (
  <Svg w={32} h={30}><path d="M2 4h7v17H2z" fill="#8c929c" stroke="#4f535b" /><path d="M8 2l22 2v16L9 19z" fill="#d7d9dc" stroke="#777" /><path d="M10 4l18 2v12l-17-1z" fill="#0c3a14" /><path d="M11 14l4-5 3 6 3-7 3 5 4-4" stroke="#3ddc4b" strokeWidth="1.500" /><path d="M16 20h7l3 6q-5 4-12 0z" fill="#e1e3e6" /></Svg>
);
const UiApp = () => <UiTile $size={32} $bg="#1f76b9" $font={23}>Ui</UiTile>;

/* ---------- Data ---------- */
const NAV = [
  [null, ["Portada", "Portal de la comunidad", "Actualidad", "Cambios recientes", "Páginas nuevas", "Página aleatoria", "Ayuda", "Donaciones", "Notificar un error"]],
  ["Imprimir/exportar", ["Crear un libro", "Descargar como PDF", "Versión para imprimir"]],
  ["Herramientas", ["Lo que enlaza aquí", "Cambios en enlazadas", "Subir archivo", "Páginas especiales", "Enlace permanente", "Información de la página", "Elemento de Wikidata", "Citar esta página"]],
  ["En otros idiomas", ["Deutsch"]],
];
const L = ({ children }) => <a href="#wiki">{children}</a>;
const GearIcon = () => (
  <Svg w={15} h={15}><circle cx="7.500" cy="7.500" r="4" stroke="#72777d" strokeWidth="3" /><path d="M7.500 0v3M7.500 12v3M0 7.500h3M12 7.500h3M2.200 2.200l2 2M10.800 10.800l2 2M12.800 2.200l-2 2M4.200 10.800l-2 2" stroke="#72777d" strokeWidth="2.600" /></Svg>
);

const Tab = ({ icon, name, active, audio }) => (
  <BrowserTab $active={active}>
    {icon}<TabName>{name}</TabName>
    {audio && <Svg w={10} h={10}><path d="M0 3h2l3-3v10L2 7H0z" fill="#4a4f5c" /><path d="M7 2v6M9 1v8" stroke="#4a4f5c" /></Svg>}
    <IconButton aria-label="Cerrar"><Cross s={9} /></IconButton>
  </BrowserTab>
);

const PanelTitle = ({ children }) => (
  <PanelHead>{children}<Grip /><Tri w={8} /><Pin /></PanelHead>
);

function BrowserWindow() {
  return (
    <Browser>
      <TabStrip>
        <Tab icon={<UiTile $size={16} $bg="#1f76b9" $font={12}>Ui</UiTile>} name="Queues - UiPath Orchest" />
        <Tab icon={<Knit />} name="Configurar correo de Off" />
        <Tab icon={<UiTile $size={16} $bg="#c3cfe8" $fg="#5f86cc" $outline $font={11}>Ui</UiTile>} name="UiPath RPA Academy" />
        <Tab icon={<Svg w={16} h={16}><rect y="2" width="15" height="12" rx="3" fill="#e0202f" /><path d="M6 5l5 3-5 3z" fill="#fff" /></Svg>} name="(10) Kirin J Callinan -" audio />
        <Tab active icon={<Svg w={16} h={16}><rect width="16" height="16" rx="3" fill="#fff" /><text x="8" y="13" textAnchor="middle" fontFamily="Liberation Serif, serif" fontSize="15" fontWeight="700" fill="#222">W</text></Svg>} name="Principio de sustitución d" />
        <Tab icon={<MailIcon />} name="Recibidos (4) - xuanra20" />
        <NewTab aria-label="Nueva pestaña" />
        <UserBadge>juanra</UserBadge>
        <Caption>
          <IconButton aria-label="Minimizar"><Svg w={13} h={14}><rect x="1" y="8" width="11" height="4" fill="#fff" stroke="#445" /></Svg></IconButton>
          <IconButton aria-label="Restaurar"><Svg w={12} h={12}><path d="M4 1h7v7H9v3H1V4h3z" fill="#fff" stroke="#445" /><path d="M4 6h3v3H4z" fill="#5d8fe6" stroke="#445" /></Svg></IconButton>
          <IconButton aria-label="Cerrar ventana"><Svg w={12} h={11}><path d="M2 1l8 9M10 1l-8 9" stroke="#445" strokeWidth="4" /><path d="M2 1l8 9M10 1l-8 9" stroke="#fff" strokeWidth="2" /></Svg></IconButton>
        </Caption>
      </TabStrip>
      <Toolbar>
        <NavButtons>
          <IconButton aria-label="Atrás"><Svg w={16} h={16}><path d="M15 8H2M8 1.500L1.500 8 8 14.500" stroke="#555" strokeWidth="2" /></Svg></IconButton>
          <IconButton aria-label="Adelante"><Svg w={16} h={16}><path d="M1 8h13M8 1.500L14.500 8 8 14.500" stroke="#ccc" strokeWidth="2" /></Svg></IconButton>
          <IconButton aria-label="Recargar"><Svg w={16} h={16}><path d="M13.500 10.500A6 6 0 118 2c2.500 0 4 1.300 5 3" stroke="#555" strokeWidth="2" /><path d="M15 1v6H9z" fill="#555" /></Svg></IconButton>
        </NavButtons>
        <AddressBar>
          <Svg w={9} h={12}><rect y="5" width="9" height="7" rx="1" fill="#0b8043" /><path d="M2 6V3a2.500 2.500 0 015 0v3" stroke="#0b8043" strokeWidth="1.500" /></Svg>
          <Secure>Es seguro</Secure>
          <Url><i>https</i>://<b>es.wikipedia.org</b>/wiki/Principio_de_sustitución_de_Liskov</Url>
          <Svg w={14} h={14}><path d="M7 1l1.700 4 4.300.300-3.300 2.800 1 4.200L7 10l-3.700 2.300 1-4.200L1 5.300 5.300 5z" stroke="#555" strokeWidth="1.500" /></Svg>
        </AddressBar>
        <ToolbarEnd>
          <UiTile $size={16} $bg="#b4b4b4" $font={12}>Ui</UiTile>
          <IconButton aria-label="Menú"><Svg w={4} h={14}><path d="M0 0h4v3H0zM0 5h4v3H0zM0 10h4v3H0z" fill="#555" /></Svg></IconButton>
        </ToolbarEnd>
      </Toolbar>
      <Wiki>
        <Sidebar>
          <Logo href="#wiki">
            <Globe />
            <Wordmark>W<small>IKIPEDI</small>A</Wordmark>
            <Tagline>La enciclopedia libre</Tagline>
          </Logo>
          {NAV.map(([title, items]) => (
            <React.Fragment key={items[0]}>
              {title && <NavTitle>{title}{title === "En otros idiomas" && <GearIcon />}</NavTitle>}
              <ul>{items.map((t) => <li key={t}><L>{t}</L></li>)}</ul>
            </React.Fragment>
          ))}
        </Sidebar>
        <WikiMain>
          <Personal>
            <Anon><Svg w={10} h={12}><circle cx="5" cy="3" r="3" fill="#72777d" /><path d="M0 7q5 2 10 0v4q-5 2-10 0z" fill="#72777d" /></Svg>No has accedido</Anon>
            <L>Discusión</L><L>Contribuciones</L><L>Crear una cuenta</L><L>Acceder</L>
          </Personal>
          <WikiTabs>
            <WikiTab href="#wiki" $on $color="#222">Artículo</WikiTab>
            <WikiTab href="#wiki" $color="#a55858">Discusión</WikiTab>
            <TabSpace />
            <WikiTab href="#wiki" $on $color="#222">Leer</WikiTab>
            <WikiTab href="#wiki">Editar</WikiTab>
            <WikiTab href="#wiki">Ver historial</WikiTab>
            <SearchCell>
              <SearchBox onSubmit={(e) => e.preventDefault()}>
                <input aria-label="Buscar en Wikipedia" placeholder="Buscar en Wikipedia" />
                <IconButton aria-label="Buscar"><Lens s={13} /></IconButton>
              </SearchBox>
            </SearchCell>
          </WikiTabs>
          <Article>
            <Title>Principio de sustitución de Liskov</Title>
            <p><b>Principio de sustitución de Liskov</b> o <b><i>LSP</i></b> (<b><i>Liskov Substitution Principle</i></b>) es un principio de la <L>programación orientada a objetos</L>. y puede definirse como: Cada <L>clase</L> que hereda de otra puede usarse como su padre sin necesidad de conocer las diferencias entre ellas.</p>
            <p>En lenguaje más formal: si <b>S</b> es un subtipo de <b>T</b>, entonces los objetos de tipo <b>T</b> en un programa de computadora pueden ser sustituidos por objetos de tipo <b>S</b> (es decir, los objetos de tipo <b>S</b> pueden sustituir objetos de tipo <b>T</b>), sin alterar ninguna de las propiedades deseables de ese programa (la corrección, la tarea que realiza, etc.). Más formalmente, el LSP es una definición particular de una relación de subtipificación, llamada tipificación (fuerte) del comportamiento, que fue introducido inicialmente por <L>Barbara Liskov</L> en una conferencia magistral en 1987 titulada <i>La Abstracción de Datos y Jerarquía</i>.<sup><L>1</L></sup>{"\u00a0 "}Se refiere más a una relación semántica que a una relación sintáctica, ya que sólo tiene la intención<br />de garantizar la interoperabilidad semántica de tipos en una jerarquía, los tipos de objeto en particular. Liskov y <L>Jeannette Wing</L> formularon el principio de manera conjunta en un artículo en el año 1994 de la siguiente manera:</p>
            <blockquote><i>Sea ϕ<b>(x)</b> una propiedad comprobable acerca de los objetos <b>x</b> de tipo T. Entonces ϕ<b>(y)</b> debe ser verdad para los objetos <b>y</b> del tipo <b>S</b> donde <b>S</b>, es un subtipo de <b>T</b>.</i></blockquote>
            <p>En el mismo artículo, Liskov y Wing detallan que su concepto de comportamiento de subtipos es una extensión de la <L>lógica de Hoare</L>, que tiene una cierta semejanza con el diseño por contrato de <L>Bertrand Meyer</L>, ya que considera la interacción de subtipos con precondiciones, postcondiciones e invariantes:</p>
            <ul>
              <li>Las precondiciones no pueden ser reforzadas por un subtipo.</li>
              <li>Las postcondiciones no pueden ser debilitadas por un subtipo.</li>
              <li>Las invariantes establecidas por el supertipo deben ser mantenidas por los subtipos.</li>
              <li>La <b>Restricción histórica</b> (O <b>Regla histórica</b>). Se acepta normalmente que los objetos deben ser modificados unicamente a través de sus métodos (<L>Encapsulamiento</L>). Como los subtipos pueden introducir nuevos métodos, ausentes en el supertipo, estos podrían cambiar el estado interno del objeto en formas que serían imposibles o inadmisibles en el supertipo. La restricción histórica impide este tipo de modificaciones. Este fue el elemento novedoso introducido por Liskov y Wing. Se puede ejemplificar una violación de este principio definiendo un subtipo PuntoMutable como descendiente de un supertipo PuntoInmutable. Esto resulta en una violación del principio histórico, porque en la historia de un objeto de tipo PuntoInmutable, el estado es siempre el mismo desde su creación, por lo que no puede incluir la historia de un PuntoMutable. Sin embargo, campos extra añadidos en un subtipo podrían ser modificables sin problema, porque estos campos no son observables desde los métodos del supertipo. Así que se podría, por ejemplo, derivar un tipo Círculo con un centro fijo pero un radio variable a partir de un tipo PuntoInmutable sin violar LSP.</li>
            </ul>
            <Subtitle>Referencias</Subtitle>
          </Article>
        </WikiMain>
        <PageScroll><Tri up c="#8a8a8a" /><PageThumb /><Tri /></PageScroll>
      </Wiki>
    </Browser>
  );
}

function RibbonBar() {
  return (
    <Ribbon>
      <Group>
        <GroupRow>
          <RibbonButton $w={42} $off><Play w={24} h={32} c="#c8c8c8" />{"Run\n(F5)"}</RibbonButton>
          <RibbonButton $w={43}><Svg w={32} h={32}><rect width="32" height="32" rx="1" fill="#f03850" /></Svg>{"Stop\n(F12)"}</RibbonButton>
          <RibbonButton $w={58} $off><Flow />{"Continue\n(F7)"}</RibbonButton>
        </GroupRow>
        Launch
      </Group>
      <Group>
        <GroupRow>
          <RibbonButton $w={54}><Warn />Validate</RibbonButton>
          <RibbonButton $w={66}><Svg w={32} h={32}><circle cx="16" cy="16" r="16" fill="#f03850" /></Svg>Breakpoints<Tri w={6} h={3} /></RibbonButton>
          <SmallStack>
            <SmallButton><Pause />Break</SmallButton>
            <SmallButton $off><ArrowR />Step Into</SmallButton>
            <SmallButton $off><ArrowR />Step Over</SmallButton>
          </SmallStack>
          <RibbonButton $w={40}><Watch />{"Slow\nStep"}</RibbonButton>
          <RibbonButton $w={50} $off><Notes />Options<Tri w={6} h={3} c="#999" /></RibbonButton>
          <RibbonButton $w={42}><Folder />{"Open\nLogs"}</RibbonButton>
        </GroupRow>
        Debug
      </Group>
    </Ribbon>
  );
}

function Designer() {
  return (
    <Editor>
      <DocTabs>
        <DocTab $w={233}><Doc />SHA1Online_Secuence (ReadOnly)</DocTab>
        <DocTab $w={209}><Doc />SHA1Online_Input (ReadOnly)</DocTab>
        <DocTab $w={223}><Doc />SetTransactionStatus (ReadOnly)</DocTab>
        <DocTab $w={196} $on><Doc />TakeScreenshot (ReadOnly)<Cross s={9} c="#d5e6f5" w={1} /></DocTab>
        <Svg w={16} h={9}><path d="M4 0h8v2H4zM4 4h8l-4 4z" fill="#777" /></Svg>
      </DocTabs>
      <EditorFrame>
        <Crumbs><span>TakeScreenshot</span><button>Expand All</button><button>Collapse All</button></Crumbs>
        <CanvasRow>
          <Canvas>
            <Card $w={485} $gold>
              <CardHead $gold><SeqIcon /><span>Screenshot sequence</span></CardHead>
              <Annotation>Usage: Set in_Folder to the folder Name where you want to save the screenshot. Alternatively, supply the full path including filename in io_FilePath. Description: This workflow captures a screenshot and logs it's name and location. It then saves it. If io_FilePath is empty, it will try to save the picture in in_Folder.{"\u00a0 "}It uses .png extension.</Annotation>
              <Connector $first><DownTri /></Connector>
              <Card $w={314} $h={68}>
                <CardHead><ShotIcon /><span>Take screenshot</span><Collapse /></CardHead>
                <Indicate href="#indicate">Indicate on screen</Indicate>
              </Card>
              <Connector><DownTri /></Connector>
              <Card $w={464}>
                <CardHead><IfIcon /><span>If no file path</span><Collapse /></CardHead>
                <Condition>Condition<input defaultValue="String.IsNullOrEmpty(io_filePath)" /></Condition>
                <Branches><span>Then</span><span>Else</span></Branches>
              </Card>
            </Card>
          </Canvas>
          <ScrollTrack>
            <ScrollButton aria-label="Scroll up"><Tri up c="#a6a6a6" /></ScrollButton>
            <ScrollThumb />
            <ScrollButton aria-label="Scroll down"><Tri c="#a6a6a6" /></ScrollButton>
          </ScrollTrack>
        </CanvasRow>
        <StatusBar>
          <button>Variables</button><button>Arguments</button><button>Imports</button>
          <ZoomTools>
            <IconButton aria-label="Pan"><Svg w={15} h={16}><path d="M4 9L1 6q0-2 2-1l2 2-2-5q1-2 2 0l2 4V1q1-1 2 0v5l2-4q2-1 1 1l-1 4 2-1q2 0 1 1l-4 6v3H6z" fill="#444" /></Svg></IconButton>
            <IconButton aria-label="Zoom"><Lens flip s={14} c="#444" /></IconButton>
            <ZoomSelect><select aria-label="Zoom level"><option>100%</option></select><CaretBox /></ZoomSelect>
            <IconButton aria-label="Fit to screen"><Svg w={14} h={14}><path d="M4 4h6v6H4zM1 1l3 3M13 1l-3 3M1 13l3-3M13 13l-3-3" stroke="#444" strokeWidth="1.500" /><path d="M0 0h5L0 5zM14 0H9l5 5zM0 14h5L0 9zM14 14H9l5-5z" fill="#444" /></Svg></IconButton>
            <IconButton aria-label="Overview"><Svg w={14} h={15}><rect width="14" height="15" fill="#444" /><path d="M2 3h10v10H2z" fill="#ddd" /><path d="M7 3v3M7 10v3M2 8h3M9 8h3" stroke="#444" strokeWidth="2" /></Svg></IconButton>
          </ZoomTools>
        </StatusBar>
      </EditorFrame>
    </Editor>
  );
}

function SidePanels() {
  return (
    <Panels>
      <Panel>
        <PanelTitle>Properties</PanelTitle>
        <Inset>
          <ClassName>System.Activities.Statements.Sequence</ClassName>
          <PropTable>
            <colgroup><col width="13" /><col /><col width="173" /></colgroup>
            <tbody>
              <tr><th colSpan={3}><Category><Minus />Common</Category></th></tr>
              <tr><th className="gutter" /><td>DisplayName</td><td><input aria-label="DisplayName" defaultValue="Screenshot sequence" /></td></tr>
              <tr><th colSpan={3}><Category><Minus />Misc</Category></th></tr>
              <tr><th className="gutter" /><td><label htmlFor="private">Private</label></td><td><Tick id="private" type="checkbox" /></td></tr>
            </tbody>
          </PropTable>
        </Inset>
      </Panel>
      <Panel>
        <PanelTitle>Outline</PanelTitle>
        <Inset $plain>
          <Tree>
            <li><TreeRow><Svg w={7} h={7}><path d="M7 0v7H0z" fill="#444" /></Svg>TakeScreenshot</TreeRow></li>
            <li><TreeRow $child><Svg w={5} h={8}><path d="M.500 .500v7l4-3.500z" stroke="#aaa" /></Svg><Selected><SeqIcon />Screenshot sequence</Selected></TreeRow></li>
          </Tree>
        </Inset>
      </Panel>
      <Bottom>
        <Panel>
          <PanelTitle>Locals</PanelTitle>
          <Inset $gray>
            <LocalsBody>
              <LocalsTable><thead><tr><th>Name</th><th>Value</th></tr></thead></LocalsTable>
              <ScrollTrack>
                <ScrollButton $c="#e0e0e0" aria-label="Scroll up"><Tri up c="#ccc" /></ScrollButton>
                <Spacer />
                <ScrollButton $c="#e0e0e0" aria-label="Scroll down"><Tri c="#ccc" /></ScrollButton>
              </ScrollTrack>
            </LocalsBody>
          </Inset>
        </Panel>
        <FootTabs><FootTab $on>Locals</FootTab><FootTab>Output</FootTab></FootTabs>
      </Bottom>
    </Panels>
  );
}

function Tasks() {
  return (
    <TaskBar>
      <Pinned $w={36} aria-label="Inicio"><Orb /></Pinned>
      <Pinned $w={86} aria-label="Reproductor"><MediaIcon /></Pinned>
      <Pinned $w={39} $after={14} aria-label="Explorador"><FilesIcon /></Pinned>
      <TaskButton $stack aria-label="Internet Explorer"><IeIcon /></TaskButton>
      <TaskButton aria-label="Skype"><SkypeIcon /></TaskButton>
      <TaskButton aria-label="Slack"><SlackIcon /></TaskButton>
      <TaskButton aria-label="Outlook"><MailAppIcon /></TaskButton>
      <TaskButton aria-label="Chrome"><ChromeIcon /></TaskButton>
      <TaskButton aria-label="Notepad++"><NppIcon /></TaskButton>
      <TaskButton aria-label="Monitor"><MonIcon /></TaskButton>
      <TaskButton aria-label="UiPath Robot"><UiApp /></TaskButton>
      <TaskButton $on aria-label="UiPath Studio"><UiApp /></TaskButton>
      <Tray>
        <Tri up c="#fff" w={8} h={4} />
        <Svg w={16} h={14}><path d="M1 0v14" stroke="#fff" strokeWidth="2" /><path d="M3 1h6v7H3zM9 3h6l-2 5H9z" fill="#fff" /></Svg>
        <Svg w={14} h={13}><path d="M4 0l3 2-3 2-3-2zM10 0l3 2-3 2-3-2zM4 4l3 2-3 2-3-2zM10 4l3 2-3 2-3-2zM7 8l3 2-3 2.500L4 10z" fill="#fff" /></Svg>
        <Svg w={14} h={14}><path d="M1 2h6v11H1z" stroke="#fff" strokeWidth="1.500" /><path d="M6 4h7v4l-2 2v3H8v-3L6 8zM7 1h1v3H7zM11 1h1v3h-1z" fill="#fff" /></Svg>
        <Svg w={15} h={14}><path d="M4 3h10v7H4zM6 13h7M1 0v5h3V0" stroke="#fff" strokeWidth="1.500" /></Svg>
        <Svg w={15} h={14}><path d="M0 5h2l4-4v12L2 9H0z" fill="#fff" /><path d="M8 5q1 2 0 4M10 3q2.500 4 0 8M12 1q4 6 0 12" stroke="#fff" /></Svg>
        <Clock>11:59<br />10/04/2018</Clock>
        <ShowDesktop aria-label="Mostrar escritorio" />
      </Tray>
    </TaskBar>
  );
}

export default function App() {
  return (
    <Desktop>
      <Global />
      <BrowserWindow />
      <Studio>
        <TitleBar>
          <QuickBar $gap={17}>
            <Svg w={16} h={16}><path d="M1 1h14v14H1zM4 1v5h8V1M3 15V9h10v6M9 2v3" stroke="#6ab0e4" strokeWidth="1.300" /></Svg>
            <Play w={12} h={15} c="#6ab0e4" />
            <Svg w={8} h={7}><path d="M1 0h6v1.500H1zM1 3h6L4 6.500z" fill="#fff" /></Svg>
          </QuickBar>
          <span>UiPath Studio Community - UiPath_REFrameWork</span>
          <QuickBar $gap={36} $end>
            <IconButton aria-label="Minimize"><Svg w={10} h={10}><path d="M0 5.500h10" stroke="#fff" /></Svg></IconButton>
            <IconButton aria-label="Restore"><Svg w={10} h={10}><path d="M.500 2.500h6v7h-6zM3 2.500v-2h6.500v7H7" stroke="#fff" /></Svg></IconButton>
            <IconButton aria-label="Close"><Cross s={11} c="#fff" w={1} /></IconButton>
          </QuickBar>
        </TitleBar>
        <MenuBar>
          <MenuTab>START</MenuTab><MenuTab>DESIGN</MenuTab><MenuTab $on>EXECUTE</MenuTab><MenuTab>SETUP</MenuTab>
          <StudioSearch><Lens flip s={14} c="#888" w={1.5} /><input aria-label="Search" placeholder="Search (Ctrl + F)" /></StudioSearch>
          <HelpTools>
            <Svg w={17} h={17}><circle cx="8.500" cy="8.500" r="7.700" stroke="#fff" strokeWidth="1.200" /><text x="8.500" y="12.500" textAnchor="middle" fontSize="11" fill="#fff">?</text></Svg>
            <Svg w={10} h={7}><path d="M1 6l4-4 4 4" stroke="#fff" strokeWidth="2" /></Svg>
          </HelpTools>
        </MenuBar>
        <RibbonBar />
        <Workspace>
          <Rail>
            <RailButton $h={68}><Svg w={16} h={16}><path d="M2 14L13 3M3 3l10 11" stroke="#4b4636" strokeWidth="2.500" /><path d="M1 1l5 1-4 4zM11 1l4 4-1 1-4-4z" fill="#4b4636" /></Svg>Activities</RailButton>
            <RailButton $h={56}><Svg w={16} h={15}><rect x="1" y="1" width="10" height="8" rx="1" fill="#f0f0f0" stroke="#666" /><path d="M12 3l2 8-8 1M14 5l1 8-6 1" stroke="#777" /></Svg>Library</RailButton>
            <RailButton $h={57}><Svg w={16} h={16}><path d="M3 15V1h10v14z" fill="#f7f7f7" stroke="#4b4636" strokeWidth="1.500" /><path d="M10 1h4v6" stroke="#4b4636" strokeWidth="2" /></Svg>Project</RailButton>
          </Rail>
          <Designer />
          <SidePanels />
        </Workspace>
        <Tasks />
      </Studio>
    </Desktop>
  );
}
